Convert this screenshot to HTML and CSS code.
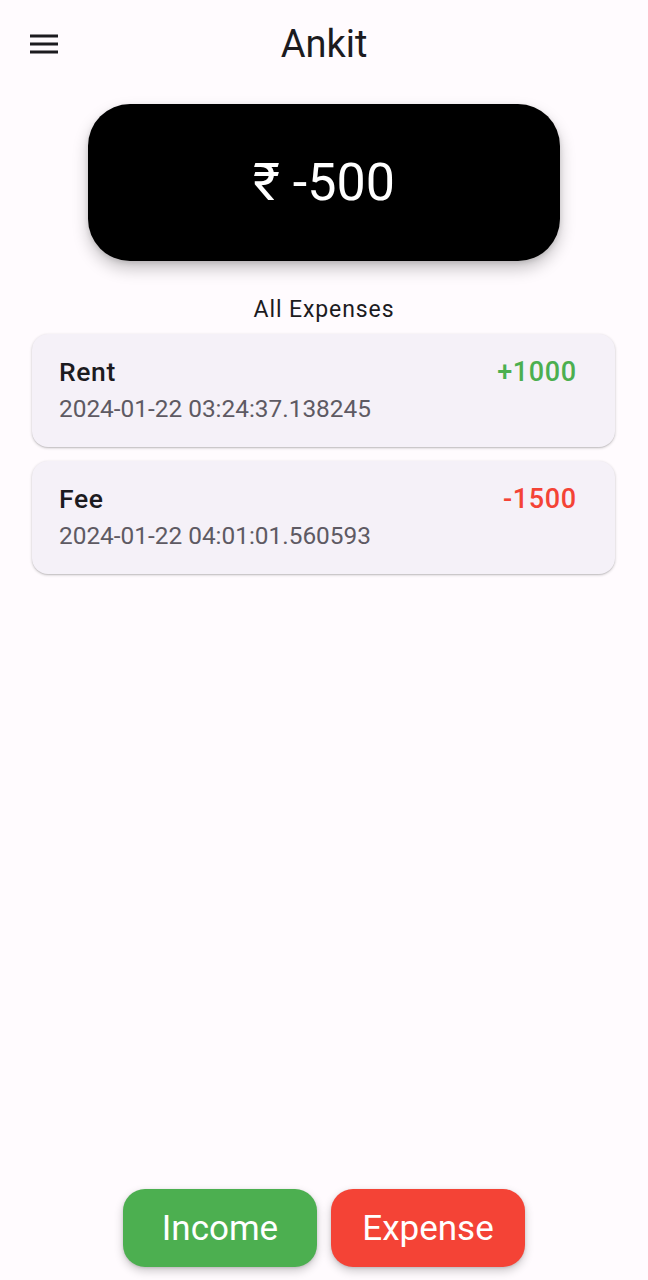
FILE: index.html
```html
<!DOCTYPE html>
<html>
<head>
<meta charset="utf-8">
<link rel="stylesheet" href="styles.css">
</head>
<body>
<div class="screen">
  <header class="appbar">
    <button class="menu" aria-label="Menu">
      <svg width="28" height="20" viewBox="0 0 28 20"><rect x="0" y="0.5" width="28" height="3" fill="#1c1b1f"/><rect x="0" y="8.5" width="28" height="3" fill="#1c1b1f"/><rect x="0" y="16.5" width="28" height="3" fill="#1c1b1f"/></svg>
    </button>
    <h1 class="title">Ankit</h1>
  </header>

  <div class="balance">₹ -500</div>

  <div class="section-title">All Expenses</div>

  <div class="list">
    <div class="card">
      <div class="row">
        <span class="name">Rent</span>
        <span class="amount plus">+1000</span>
      </div>
      <div class="date">2024-01-22 03:24:37.138245</div>
    </div>
    <div class="card">
      <div class="row">
        <span class="name">Fee</span>
        <span class="amount minus">-1500</span>
      </div>
      <div class="date">2024-01-22 04:01:01.560593</div>
    </div>
  </div>

  <div class="actions">
    <button class="btn income">Income</button>
    <button class="btn expense">Expense</button>
  </div>
</div>
</body>
</html>
```

FILE: styles.css
```css
* { box-sizing: border-box; }
html, body {
  margin: 0;
  padding: 0;
  background: #fffbfe;
  font-family: Roboto, "Noto Sans", sans-serif;
  color: #1c1b1f;
}
.screen {
  display: flex;
  flex-direction: column;
  height: 1280px;
}
.appbar {
  position: relative;
  height: 88px;
  display: flex;
  align-items: center;
  justify-content: center;
}
.menu {
  position: absolute;
  left: 30px;
  top: 34px;
  padding: 0;
  border: 0;
  background: none;
  width: 28px;
  height: 20px;
  display: block;
}
.menu svg { display: block; }
.title {
  margin: 0;
  font-size: 38px;
  font-weight: 400;
  line-height: 44px;
  color: #1c1b1f;
}
.balance {
  align-self: center;
  margin-top: 16px;
  width: 472px;
  height: 157px;
  border-radius: 42px;
  background: #000;
  color: #fff;
  display: flex;
  align-items: center;
  justify-content: center;
  font-size: 52px;
  box-shadow: 0 8px 16px rgba(0,0,0,0.22), 0 2px 5px rgba(0,0,0,0.12);
}
.section-title {
  margin-top: 35px;
  text-align: center;
  font-size: 23px;
  line-height: 28px;
  letter-spacing: 0.9px;
  color: #1c1b1f;
}
.list {
  margin: 10px 33px 0 32px;
  display: flex;
  flex-direction: column;
  gap: 14px;
}
.card {
  background: #f5f1f8;
  border-radius: 16px;
  padding: 22px 39px 23px 27px;
  box-shadow: 0 1px 3px rgba(0,0,0,0.22), 0 1px 1px rgba(0,0,0,0.08);
}
.row {
  display: flex;
  justify-content: space-between;
  align-items: baseline;
}
.name {
  font-size: 26.5px;
  line-height: 32px;
  font-weight: 500;
  letter-spacing: 0.6px;
  color: #1c1b1f;
}
.amount {
  font-size: 27px;
  line-height: 32px;
  font-weight: 500;
  letter-spacing: 0.6px;
  margin-right: -0.6px;
}
.plus { color: #4caf50; }
.minus { color: #f44336; }
.date {
  margin-top: 6px;
  font-size: 24.4px;
  line-height: 30px;
  color: #5e5a63;
}
.actions {
  margin-top: auto;
  margin-bottom: 13px;
  display: flex;
  justify-content: center;
  gap: 14px;
}
.btn {
  width: 194px;
  height: 78px;
  border: 0;
  border-radius: 22px;
  color: #fff;
  font-family: Roboto, "Noto Sans", sans-serif;
  font-size: 35px;
  font-weight: 400;
  box-shadow: 0 4px 10px rgba(0,0,0,0.2), 0 1px 3px rgba(0,0,0,0.12);
  padding: 0;
}
.income { background: #4caf50; }
.expense { background: #f44336; }
```
